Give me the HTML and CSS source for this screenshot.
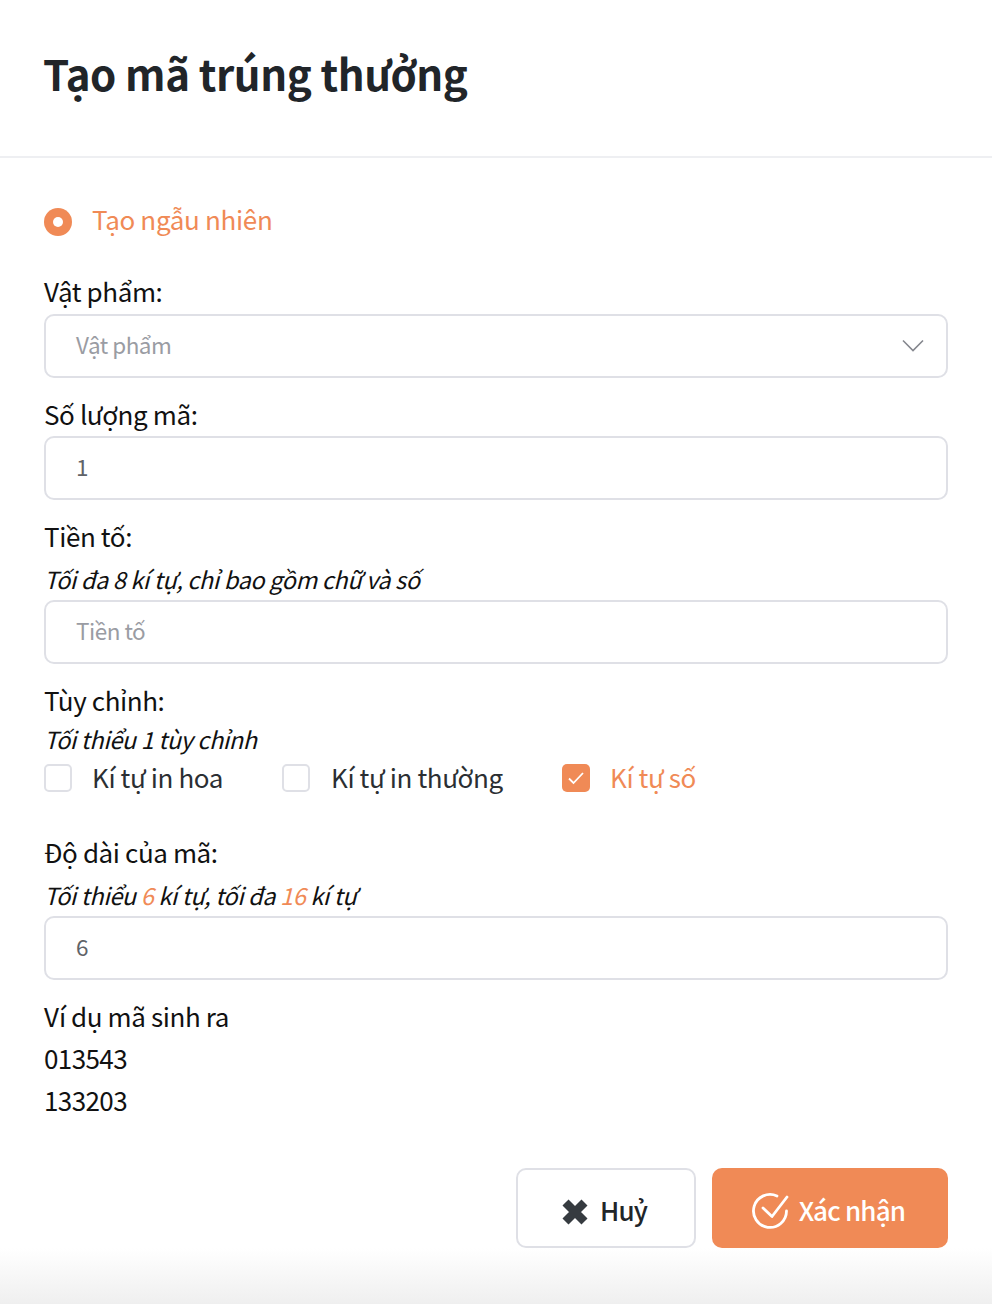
FILE: index.html
```html
<!DOCTYPE html>
<html lang="vi">
<head>
<meta charset="utf-8">
<title>Tạo mã trúng thưởng</title>
<link rel="stylesheet" href="styles.css">
</head>
<body>
<header class="head"><h1 class="title">Tạo mã trúng thưởng</h1></header>
<main class="form">
  <div class="radio-row"><span class="radio"></span><span class="accent radio-text">Tạo ngẫu nhiên</span></div>
  <div class="label first">Vật phẩm:</div>
  <div class="input placeholder select">Vật phẩm
    <svg class="chev" viewBox="0 0 22 13" width="22" height="13"><path d="M1 1.500l10 10 10-10" fill="none" stroke="#85878e" stroke-width="1.600"/></svg>
  </div>
  <div class="label">Số lượng mã:</div>
  <div class="input">1</div>
  <div class="label">Tiền tố:</div>
  <div class="hint">Tối đa 8 kí tự, chỉ bao gồm chữ và số</div>
  <div class="input placeholder">Tiền tố</div>
  <div class="label">Tùy chỉnh:</div>
  <div class="hint short">Tối thiểu 1 tùy chỉnh</div>
  <div class="checks">
    <div class="check c1"><span class="box"></span><span class="check-text">Kí tự in hoa</span></div>
    <div class="check c2"><span class="box"></span><span class="check-text">Kí tự in thường</span></div>
    <div class="check accent"><span class="box on"><svg viewBox="0 0 28 28" width="28" height="28"><path d="M7 14.500l4.500 4.500 9.500-10" fill="none" stroke="#fff" stroke-width="1.800"/></svg></span><span class="check-text">Kí tự số</span></div>
  </div>
  <div class="label wide">Độ dài của mã:</div>
  <div class="hint">Tối thiểu <span class="accent">6</span> kí tự, tối đa <span class="accent">16</span> kí tự</div>
  <div class="input">6</div>
  <div class="label">Ví dụ mã sinh ra</div>
  <div class="line">013543</div>
  <div class="line">133203</div>
  <div class="actions">
    <button class="btn cancel"><svg viewBox="0 0 28 28" width="28" height="28"><path d="M4.500 5.500L23.500 24.500M23.500 5.500L4.500 24.500" fill="none" stroke="#363b40" stroke-width="8.500"/></svg><span class="btn-text">Huỷ</span></button>
    <button class="btn ok"><svg viewBox="0 0 38 38" width="38" height="38"><path d="M35.500 19A16.500 16.500 0 1 1 26 4" fill="none" stroke="#fff" stroke-width="2.800" stroke-linecap="round"/><path d="M12 16l9 8.500L36 5" fill="none" stroke="#fff" stroke-width="2.800" stroke-linecap="round" stroke-linejoin="round"/></svg><span class="btn-text">Xác nhận</span></button>
  </div>
</main>
<div class="shade"></div>
</body>
</html>
```
FILE: styles.css
```css
* { box-sizing: border-box; }
html, body { margin: 0; padding: 0; }
body {
  width: 992px;
  height: 1304px;
  overflow: hidden;
  background: #fff;
  color: #111;
  font-family: "Noto Sans CJK SC", "Noto Sans", sans-serif;
  font-size: 26px;
  letter-spacing: -0.4px;
  line-height: 42px;
}
.head {
  height: 158px;
  border-bottom: 2px solid #eeeff2;
  padding: 0 43px;
  display: flex;
  align-items: center;
}
.title {
  margin: 0 0 10px;
  font-size: 42px;
  letter-spacing: -0.42px;
  line-height: 60px;
  font-weight: 700;
  color: #212529;
}
.form { padding: 0 44px; }
.accent { color: #f08a56; }
.radio-row {
  display: flex;
  align-items: center;
  gap: 20px;
  margin-top: 43px;
}
.radio-text { line-height: 36px; padding-bottom: 6px; letter-spacing: -0.33px; }
.radio {
  width: 28px;
  height: 28px;
  border-radius: 50%;
  background: #f08a56;
  display: flex;
  align-items: center;
  justify-content: center;
}
.radio::after {
  content: "";
  width: 10px;
  height: 10px;
  border-radius: 50%;
  background: #fff;
}
.label, .line { line-height: 40px; padding-bottom: 2px; }
.label { margin-top: 16px; }
.label.first { margin-top: 28px; margin-bottom: 1px; }
.label.wide { margin-top: 32px; }
.line { letter-spacing: -0.6px; }
.hint {
  font-style: italic;
  font-size: 23.5px;
  letter-spacing: -0.38px;
  line-height: 40px;
  padding-bottom: 2px;
  margin-top: 1px;
  margin-bottom: -1px;
}
.hint.short { line-height: 34px; margin: 0; }
.input {
  height: 64px;
  border: 2px solid #dfe0e6;
  border-radius: 10px;
  padding: 0 30px 4px;
  display: flex;
  align-items: center;
  justify-content: space-between;
  font-size: 22.5px;
  letter-spacing: -0.5px;
  color: #5f6368;
  background: #fff;
}
.input.placeholder { color: #9a9ca3; }
.chev { margin: 2px -8px 0 0; }
.checks { display: flex; height: 42px; }
.check { display: flex; align-items: center; gap: 20px; }
.check-text { line-height: 38px; padding-bottom: 4px; }
.c1 { width: 238px; }
.c2 { width: 280px; gap: 21px; }
.box {
  width: 28px;
  height: 28px;
  margin-bottom: 2px;
  border: 2px solid #dfe0e6;
  border-radius: 5px;
  background: #fff;
  display: block;
}
.box.on { border: 0; background: #f08a56; }
.box svg { display: block; }
.check.c1, .check.c2 { color: #2b2f33; }
.actions {
  display: flex;
  justify-content: flex-end;
  gap: 16px;
  margin-top: 46px;
}
.btn {
  height: 80px;
  border-radius: 10px;
  font: inherit;
  letter-spacing: -0.8px;
  font-weight: 500;
  display: flex;
  align-items: center;
  justify-content: center;
  padding: 6px 4px 0 0;
}
.btn-text { padding-bottom: 2px; line-height: 40px; }
.cancel {
  width: 180px;
  gap: 11px;
  border: 2px solid #dfe0e6;
  background: #fff;
  color: #212529;
}
.ok {
  width: 236px;
  gap: 10px;
  border: 0;
  background: #f08a56;
  color: #fff;
}
.shade {
  height: 56px;
  background: linear-gradient(#fff, #efefef);
}
```
